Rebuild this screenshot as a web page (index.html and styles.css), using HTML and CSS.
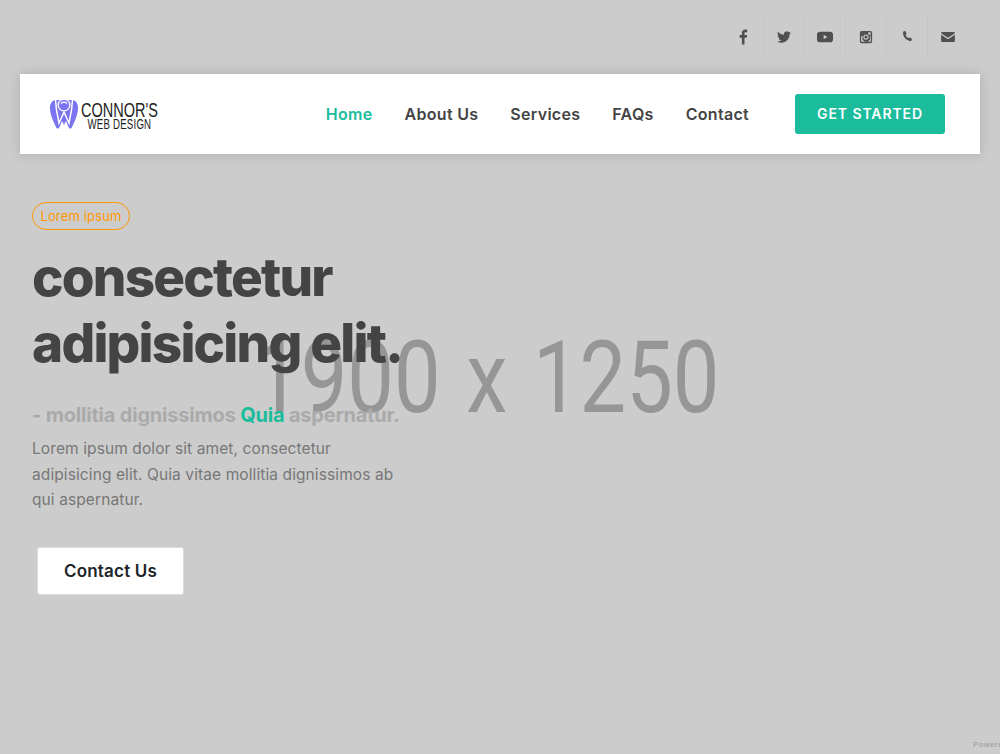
FILE: index.html
```html
<!DOCTYPE html>
<html lang="en">
<head>
    <meta charset="UTF-8">
    <meta name="viewport" content="width=device-width, initial-scale=1.0">
    <title>Connor's Web Design</title>
    <link rel="stylesheet" href="styles.css">
</head>
<body>
    <div class="placeholder">1900 x 1250</div>

    <div class="top-bar">
        <a class="social"><svg class="icon-f" viewBox="0 0 24 24"><path d="M14 22v-9h3l.5-3.6H14V7.2c0-1 .3-1.7 1.8-1.7h1.8V2.2C17.2 2.1 16.2 2 15 2c-2.7 0-4.5 1.6-4.5 4.6v2.8h-3V13h3v9z"/></svg></a>
        <a class="social"><svg viewBox="0 0 24 24"><path d="M23.95 4.57a10 10 0 01-2.82.77 4.96 4.96 0 002.16-2.72c-.95.55-2 .95-3.12 1.18a4.92 4.92 0 00-8.38 4.48C7.69 8.09 4.07 6.13 1.64 3.16a4.82 4.82 0 00-.67 2.48c0 1.71.87 3.21 2.19 4.1a4.9 4.9 0 01-2.23-.61v.06c0 2.39 1.7 4.38 3.95 4.83a5 5 0 01-2.21.09 4.94 4.94 0 004.6 3.42A9.87 9.87 0 010 19.54a14 14 0 007.56 2.21c9.05 0 14-7.5 14-13.98 0-.21 0-.42-.02-.63a9.94 9.94 0 002.46-2.55z"/></svg></a>
        <a class="social"><svg class="icon-yt" viewBox="0 0 24 24"><path fill-rule="evenodd" d="M4 4h16c2 0 4 1.6 4 4v8c0 2.400-2 4-4 4H4c-2 0-4-1.600-4-4V8c0-2.400 2-4 4-4zm6 4.800v6.400l5.400-3.200z"/></svg></a>
        <a class="social"><svg viewBox="0 0 24 24"><path fill-rule="evenodd" d="M4.500 1.500h15a3 3 0 013 3v15a3 3 0 01-3 3h-15a3 3 0 01-3-3v-15a3 3 0 013-3zM16 4v4h4V4zM12 7.500a4.500 4.500 0 100 9 4.500 4.500 0 000-9zM3.700 10.500v8.300c0 .8.700 1.500 1.500 1.500h13.600c.8 0 1.500-.7 1.500-1.500v-8.300h-2.200a6.500 6.500 0 11-11.200 0zM12 9.300a2.700 2.700 0 110 5.400 2.700 2.700 0 010-5.400z"/></svg></a>
        <a class="social"><svg class="icon-phone" viewBox="0 0 24 24"><path d="M5 2.500l3-.5 2.500 5-2.200 1.800c.8 2.800 2.900 5.300 5.400 6.300l2.100-1.500 4.700 3.200-1.300 2.500c-.6 1-1.700 1.300-3 1C10 19 5 13.500 3.800 7.500c-.3-2 .2-4 1.200-5z"/></svg></a>
        <a class="social"><svg viewBox="0 0 24 24"><path d="M2.500 3.500h19c1.300 0 2.300 1 2.300 2.200L12 13.400.2 5.700c0-1.200 1-2.200 2.300-2.200zM.2 8.300L12 16l11.800-7.700v10c0 1.200-1 2.200-2.300 2.200h-19C1.200 20.500.2 19.500.2 18.300z"/></svg></a>
    </div>

    <nav class="navbar">
        <a class="logo">
            <svg class="logo-mark" viewBox="0 0 28 30">
                <path fill="#7b74f0" d="M5 1C1.500 2 0 5 0 9c0 6 3 13 6 19 .8 2 2.500 2 3.500 0l2.500-6 2 4 2-4 2.500 6c1 2 2.700 2 3.500 0 3-6 6-13 6-19 0-4-1.500-7-5-8z"/>
                <circle cx="14" cy="6" r="6.500" fill="#fff"/>
                <circle cx="14" cy="6" r="5.200" fill="#7b74f0"/>
                <path fill="#fff" d="M10.500 5.500a3.500 3 0 017 0 5 5 0 00-7 0z"/>
                <path fill="none" stroke="#fff" stroke-width="1.500" d="M5.500 1l1 10 2.500 13 5-11 5 11 2.500-13 1-10"/>
            </svg>
            <span class="logo-text">
                <span class="logo-name">CONNOR'S</span>
                <span class="logo-sub">WEB DESIGN</span>
            </span>
        </a>
        <div class="nav-links">
            <a class="nav-link active">Home</a>
            <a class="nav-link">About Us</a>
            <a class="nav-link">Services</a>
            <a class="nav-link">FAQs</a>
            <a class="nav-link">Contact</a>
        </div>
        <a class="btn-started">GET STARTED</a>
    </nav>

    <section class="hero">
        <span class="badge">Lorem ipsum</span>
        <h1>consectetur adipisicing elit.</h1>
        <h3>- mollitia dignissimos <span class="accent">Quia</span> aspernatur.</h3>
        <p>Lorem ipsum dolor sit amet, consectetur adipisicing elit. Quia vitae mollitia dignissimos ab qui aspernatur.</p>
        <a class="btn-contact">Contact Us</a>
    </section>

    <div class="powered">Powered by</div>
</body>
</html>
```

FILE: styles.css
```css
html, body {
    height: 100%;
}

body {
    margin: 0;
    overflow: hidden;
    position: relative;
    background-color: #ccc;
    font-family: 'Inter', 'Open Sans', sans-serif;
    color: #444;
}

.placeholder {
    position: absolute;
    left: 254px;
    top: 313px;
    font-family: 'Roboto', sans-serif;
    font-size: 100px;
    line-height: 130px;
    word-spacing: 6px;
    color: #969696;
    white-space: nowrap;
    transform: scaleX(0.83);
    transform-origin: left top;
}

.top-bar {
    position: relative;
    height: 74px;
    padding: 15px 31px 0 0;
    box-sizing: border-box;
    display: flex;
    justify-content: flex-end;
    align-items: flex-start;
}

.social {
    width: 41px;
    height: 43px;
    box-sizing: border-box;
    display: flex;
    align-items: center;
    justify-content: center;
    border-right: 1px solid #c6c6c6;
}

.social:last-child {
    border-right-color: transparent;
}

.social svg {
    width: 14px;
    height: 14px;
    fill: #505050;
}

.social .icon-f {
    width: 18px;
    height: 18px;
}

.social .icon-yt {
    width: 16px;
    height: 16px;
}

.social .icon-phone {
    width: 13px;
    height: 13px;
}

.navbar {
    position: relative;
    height: 80px;
    margin: 0 20px;
    padding: 0 35px 0 30px;
    display: flex;
    align-items: center;
    background: white;
    box-shadow: 0 0 12px rgba(0, 0, 0, 0.15);
}

.logo {
    display: flex;
    align-items: center;
    gap: 3px;
}

.logo-mark {
    width: 28px;
    height: 30px;
}

.logo-text {
    display: flex;
    flex-direction: column;
    align-items: center;
    padding-top: 4px;
    font-family: 'Liberation Sans', sans-serif;
    color: #222;
    transform: scaleX(0.69);
    transform-origin: left center;
}

.logo-name {
    font-size: 21px;
    line-height: 17px;
}

.logo-sub {
    font-size: 14px;
    line-height: 13px;
    letter-spacing: 0.3px;
}

.nav-links {
    margin-left: auto;
    display: flex;
    gap: 32px;
}

.nav-link {
    font-size: 16px;
    font-weight: 600;
    letter-spacing: 0.3px;
    color: #444;
}

.nav-link.active {
    color: #1abc9c;
}

.btn-started {
    margin-left: 46px;
    width: 150px;
    height: 40px;
    line-height: 40px;
    text-align: center;
    background-color: #1abc9c;
    color: white;
    border-radius: 3px;
    font-size: 14px;
    font-weight: 600;
    letter-spacing: 0.9px;
}

.hero {
    position: relative;
    width: 375px;
    padding: 48px 0 0 32px;
}

.badge {
    display: inline-block;
    width: 98px;
    height: 28px;
    line-height: 26px;
    text-align: center;
    box-sizing: border-box;
    border: 1px solid #ff9800;
    border-radius: 14px;
    color: #ff9800;
    font-size: 13px;
    letter-spacing: 0.15px;
}

.hero h1 {
    margin: 14px -40px 0 0;
    font-size: 53px;
    font-weight: 800;
    line-height: 66px;
    letter-spacing: -1.8px;
    color: #444;
}

.hero h3 {
    margin: 24px 0 0;
    font-size: 20px;
    line-height: 30px;
    font-weight: 700;
    letter-spacing: -0.2px;
    color: #aaa;
    white-space: nowrap;
}

.accent {
    color: #1abc9c;
}

.hero p {
    margin: 6px 0 0;
    font-size: 15.5px;
    line-height: 25.500px;
    letter-spacing: 0.1px;
    color: #777;
}

.btn-contact {
    display: block;
    width: 147px;
    height: 48px;
    line-height: 46px;
    box-sizing: border-box;
    margin: 34px 0 0 5px;
    text-align: center;
    background: white;
    border: 1px solid #ddd;
    border-radius: 3px;
    font-size: 17px;
    font-weight: 600;
    letter-spacing: 0.2px;
    color: #212529;
}

.powered {
    position: absolute;
    left: 973px;
    top: 740px;
    font-family: 'Liberation Sans', sans-serif;
    font-size: 8px;
    letter-spacing: 0.5px;
    color: #999;
    white-space: nowrap;
}
```
